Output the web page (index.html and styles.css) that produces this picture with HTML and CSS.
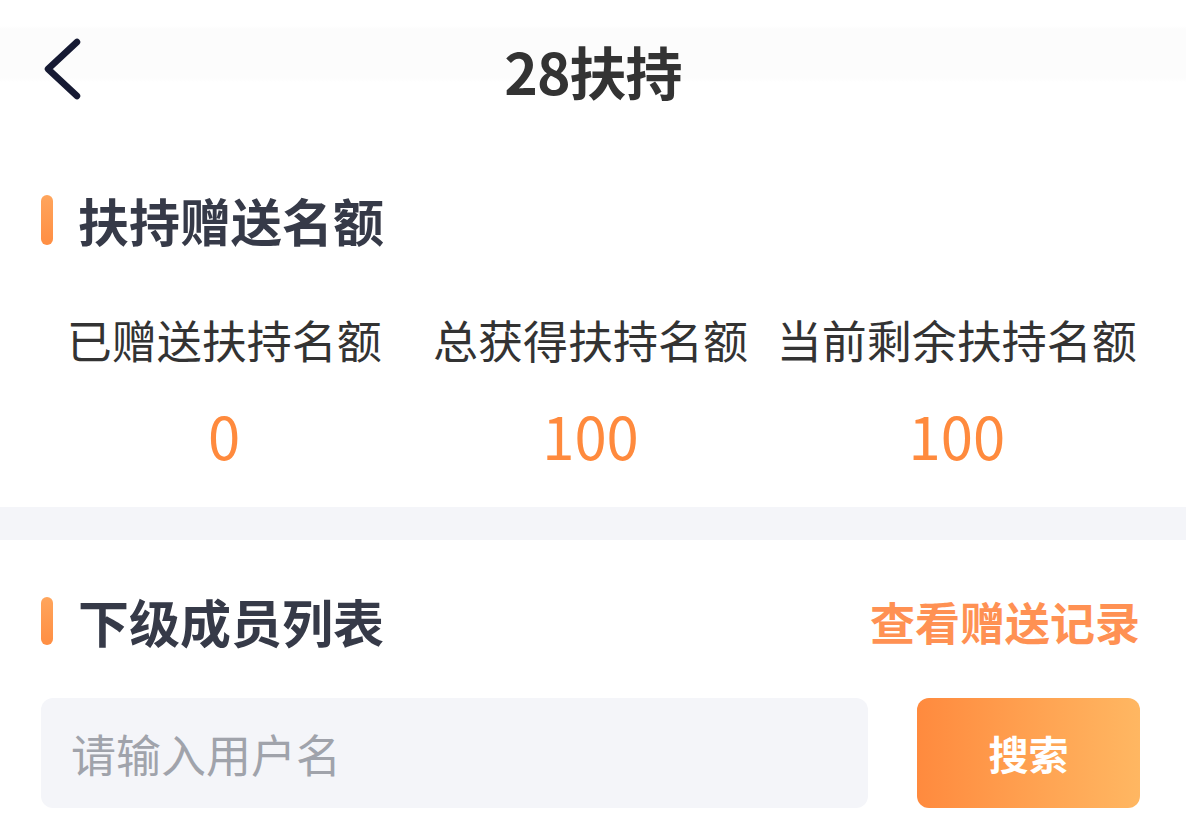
FILE: index.html
```html
<!DOCTYPE html>
<html lang="zh-CN">
<head>
<meta charset="utf-8">
<title>28扶持</title>
<link rel="stylesheet" href="styles.css">
</head>
<body>
<div class="page">
  <header class="header">
    <a class="back" href="#">
      <svg width="44" height="66" viewBox="0 0 44 66"><path d="M33 5 L4 32 L33 59" fill="none" stroke="#161a33" stroke-width="6.5" stroke-linecap="round" stroke-linejoin="round"/></svg>
    </a>
    <h1 class="title">28扶持</h1>
    <span></span>
  </header>

  <section class="quota">
    <div class="sec-title"><span class="bar"></span><span class="sec-text">扶持赠送名额</span></div>
    <div class="stats">
      <div class="stat"><div class="label">已赠送扶持名额</div><div class="num">0</div></div>
      <div class="stat"><div class="label">总获得扶持名额</div><div class="num">100</div></div>
      <div class="stat"><div class="label">当前剩余扶持名额</div><div class="num">100</div></div>
    </div>
  </section>

  <div class="divider"></div>

  <section class="members">
    <div class="sec-row">
      <div class="sec-title"><span class="bar"></span><span class="sec-text">下级成员列表</span></div>
      <a class="link" href="#">查看赠送记录</a>
    </div>
    <div class="search">
      <input class="input" type="text" placeholder="请输入用户名">
      <button class="btn" type="button">搜索</button>
    </div>
  </section>
</div>
</body>
</html>
```

FILE: styles.css
```css
* { box-sizing: border-box; }
html, body { margin: 0; padding: 0; background: #ffffff; }
body {
  font-family: "Noto Sans CJK SC", "Noto Sans", sans-serif;
  color: #333333;
}
.page { width: 1186px; }

.header {
  height: 144px;
  display: grid;
  grid-template-columns: 1fr auto 1fr;
  align-items: center;
  padding: 0 44px;
  background: linear-gradient(#ffffff 0, #ffffff 26px, #fcfcfc 29px, #fcfcfc 78px, #ffffff 82px);
}
.back { display: flex; width: 44px; height: 66px; margin-top: -4px; }
.title {
  margin: 0 0 3px;
  font-size: 57px;
  font-weight: 700;
  color: #333333;
  line-height: 1;
  letter-spacing: -1px;
}

.quota { padding: 51px 46px 37px 41px; }
.sec-title { display: flex; align-items: center; height: 50px; }
.bar {
  width: 12px;
  height: 50px;
  border-radius: 6px;
  background: linear-gradient(#ffa55c, #ff8e43);
  margin-right: 25px;
}
.sec-text {
  font-size: 51px;
  font-weight: 700;
  color: #363a48;
  line-height: 1;
}

.stats {
  display: grid;
  grid-template-columns: repeat(3, 1fr);
  margin-top: 65px;
}
.stat { display: flex; flex-direction: column; align-items: center; }
.label {
  font-size: 45px;
  line-height: 60px;
  color: #333333;
  white-space: nowrap;
}
.num {
  margin-top: 30px;
  font-size: 58px;
  line-height: 70px;
  color: #ff8a3d;
}

.divider { height: 33px; background: #f4f5f9; }

.members { padding: 56px 46px 30px 41px; }
.sec-row { display: flex; justify-content: space-between; align-items: center; }
.members .bar { height: 48px; }
.link {
  font-size: 45px;
  font-weight: 700;
  color: #ff9153;
  text-decoration: none;
  line-height: 1;
}

.search {
  display: flex;
  gap: 49px;
  margin-top: 52px;
  height: 110px;
}
.input {
  flex: 1;
  height: 110px;
  border: none;
  outline: none;
  border-radius: 12px;
  background: #f4f5f9;
  padding: 0 30px;
  font-family: "Noto Sans CJK SC", "Noto Sans", sans-serif;
  font-size: 45px;
  color: #333333;
}
.input::placeholder { color: #a0a3ab; }
.btn {
  width: 223px;
  height: 110px;
  border: none;
  border-radius: 12px;
  background: linear-gradient(90deg, #ff8a3e, #ffb762);
  color: #ffffff;
  font-family: "Noto Sans CJK SC", "Noto Sans", sans-serif;
  font-size: 40px;
  font-weight: 700;
}
```
